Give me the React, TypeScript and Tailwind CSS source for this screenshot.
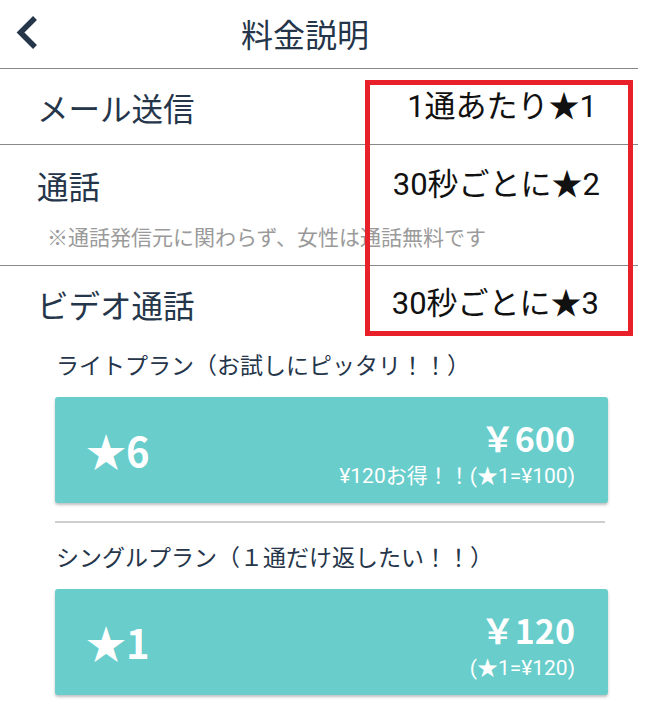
import React from "react";

const jp = { fontFamily: '"Noto Sans CJK JP", sans-serif' };
const roboto = { fontFamily: 'Roboto, "Noto Sans CJK JP", sans-serif' };

const BackIcon = () => (
  <svg width="22" height="35" viewBox="0 0 22 35" className="block">
    <polyline
      points="19,3 4.5,17.5 19,32"
      fill="none"
      stroke="#25354a"
      strokeWidth="5.5"
      strokeLinejoin="miter"
    />
  </svg>
);

const plans = [
  {
    label: "ライトプラン（お試しにピッタリ！！）",
    stars: "★6",
    price: "￥600",
    note: "¥120お得！！(★1=¥100)",
  },
  {
    label: "シングルプラン（１通だけ返したい！！）",
    stars: "★1",
    price: "￥120",
    note: "(★1=¥120)",
  },
];

const PlanCard = ({ plan }: { plan: (typeof plans)[number] }) => (
  <div className="mx-[55px] w-[553px]">
    <div className="pl-[1px] text-[23px] leading-[30px] text-[#25354a]" style={jp}>
      {plan.label}
    </div>
    <div className="mt-[18px] h-[106px] rounded-[3px] bg-[#68cdcb] shadow-[0_2px_3px_rgba(0,0,0,0.25)] flex items-center justify-between pl-[31px] pr-[33px] text-white">
      <div className="text-[40px] font-bold leading-none" style={jp}>
        {plan.stars}
      </div>
      <div className="flex flex-col items-end pt-[6px]">
        <div className="text-[34px] font-bold leading-[42px]" style={jp}>
          {plan.price}
        </div>
        <div className="mt-[4px] text-[21px] leading-[26px]" style={roboto}>
          {plan.note}
        </div>
      </div>
    </div>
  </div>
);

export default function App() {
  return (
    <div className="relative w-[660px] h-[716px] bg-white overflow-hidden">
      <div className="w-[638px]">
        <div className="h-[69px] flex items-center border-b border-[#888]">
          <div className="ml-[16px] -mt-[4px]">
            <BackIcon />
          </div>
          <div className="ml-[203px] -mt-[2px] text-[32px] leading-[40px] text-[#25354a]" style={jp}>
            料金説明
          </div>
        </div>

        <div className="h-[76px] flex items-center justify-between pl-[37px] pr-[41px] border-b border-[#888]">
          <span className="text-[31.5px] leading-[40px] text-[#25354a]" style={jp}>
            メール送信
          </span>
          <span className="text-[31px] leading-[40px] text-[#111]" style={roboto}>
            1通あたり★1
          </span>
        </div>

        <div className="h-[121px] pt-[20px] border-b border-[#888]">
          <div className="flex items-center justify-between pl-[37px] pr-[38px] h-[40px]">
            <span className="text-[31.5px] leading-[40px] text-[#25354a]" style={jp}>
              通話
            </span>
            <span className="text-[31px] leading-[40px] text-[#111]" style={roboto}>
              30秒ごとに★2
            </span>
          </div>
          <div className="mt-[17px] pl-[47px] text-[21px] leading-[28px] text-[#9a9a9a]" style={jp}>
            ※通話発信元に関わらず、女性は通話無料です
          </div>
        </div>

        <div className="pt-[18px] flex items-center justify-between pl-[37px] pr-[39px]">
          <span className="text-[31.5px] leading-[40px] text-[#25354a]" style={jp}>
            ビデオ通話
          </span>
          <span className="text-[31px] leading-[40px] text-[#111]" style={roboto}>
            30秒ごとに★3
          </span>
        </div>
      </div>

      <div className="mt-[25px]">
        <PlanCard plan={plans[0]} />
        <div className="mx-[55px] mt-[18px] h-[2px] bg-[#cfcfcf]" />
        <div className="mt-[18px]">
          <PlanCard plan={plans[1]} />
        </div>
      </div>

      <div className="absolute left-[365px] top-[80px] w-[268px] h-[256px] border-[5px] border-[#e8202a]" />
    </div>
  );
}
